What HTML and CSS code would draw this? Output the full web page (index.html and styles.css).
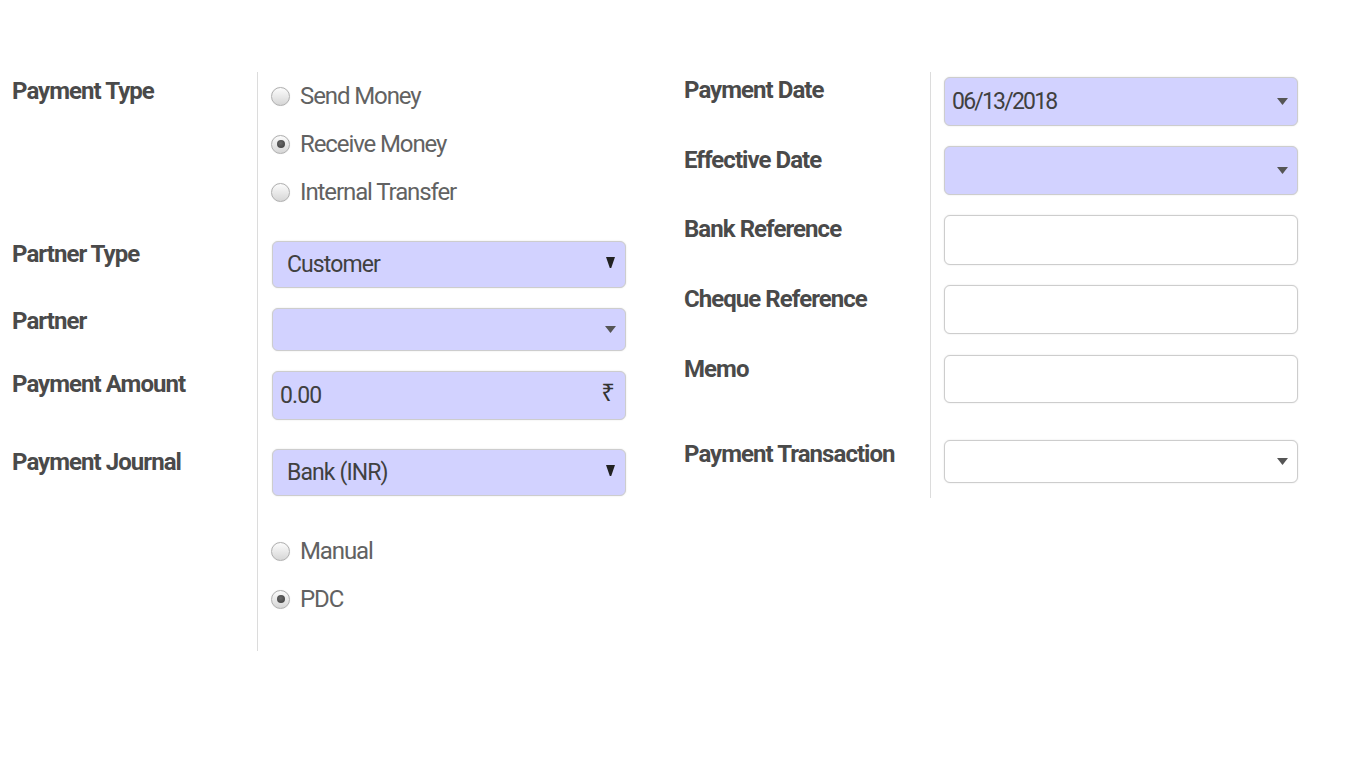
FILE: index.html
```html
<!DOCTYPE html>
<html>
<head>
<meta charset="utf-8">
<link rel="stylesheet" href="styles.css">
</head>
<body>
<div class="sheet">
  <div class="group left">
    <div class="lbl l-first">Payment Type</div>
    <div class="cell pb25">
      <div class="radio"><span class="dot"></span><span class="rtext">Send Money</span></div>
      <div class="radio"><span class="dot on"></span><span class="rtext">Receive Money</span></div>
      <div class="radio"><span class="dot"></span><span class="rtext">Internal Transfer</span></div>
    </div>

    <div class="lbl">Partner Type</div>
    <div class="cell pb20">
      <div class="field req h47 sel"><span class="val">Customer</span><svg class="tri" width="9" height="11" viewBox="0 0 9 11"><polygon points="0,0 9,0 5.2,11 3.8,11" fill="#222"/></svg></div>
    </div>

    <div class="lbl">Partner</div>
    <div class="cell pb20">
      <div class="field req h43 m2o"><span class="val"></span><svg class="caret" width="11" height="7" viewBox="0 0 11 7"><polygon points="0,0 11,0 5.5,7" fill="#555"/></svg></div>
    </div>

    <div class="lbl">Payment Amount</div>
    <div class="cell pb29">
      <div class="field req h49 num"><span class="val">0.00</span><span class="cur">₹</span></div>
    </div>

    <div class="lbl">Payment Journal</div>
    <div class="cell pb31">
      <div class="field req h47 sel"><span class="val">Bank (INR)</span><svg class="tri" width="9" height="11" viewBox="0 0 9 11"><polygon points="0,0 9,0 5.2,11 3.8,11" fill="#222"/></svg></div>
    </div>

    <div class="lbl"></div>
    <div class="cell pb28">
      <div class="radio"><span class="dot"></span><span class="rtext">Manual</span></div>
      <div class="radio"><span class="dot on"></span><span class="rtext">PDC</span></div>
    </div>
  </div>

  <div class="group right">
    <div class="lbl r-first">Payment Date</div>
    <div class="cell pt5 pb20">
      <div class="field req h49 num m2o"><span class="val date">06/13/2018</span><svg class="caret" width="11" height="7" viewBox="0 0 11 7"><polygon points="0,0 11,0 5.5,7" fill="#555"/></svg></div>
    </div>

    <div class="lbl r">Effective Date</div>
    <div class="cell pb20">
      <div class="field req h49 m2o"><span class="val"></span><svg class="caret" width="11" height="7" viewBox="0 0 11 7"><polygon points="0,0 11,0 5.5,7" fill="#555"/></svg></div>
    </div>

    <div class="lbl r">Bank Reference</div>
    <div class="cell pb20">
      <div class="field h50"></div>
    </div>

    <div class="lbl r">Cheque Reference</div>
    <div class="cell pb21">
      <div class="field h49"></div>
    </div>

    <div class="lbl r">Memo</div>
    <div class="cell pb37">
      <div class="field h48"></div>
    </div>

    <div class="lbl r">Payment Transaction</div>
    <div class="cell pb15">
      <div class="field h43 m2o"><span class="val"></span><svg class="caret" width="11" height="7" viewBox="0 0 11 7"><polygon points="0,0 11,0 5.5,7" fill="#555"/></svg></div>
    </div>
  </div>
</div>
</body>
</html>
```

FILE: styles.css
```css
html, body {
  margin: 0;
  padding: 0;
  background: #ffffff;
}

body {
  font-family: Roboto, "Liberation Sans", Arial, sans-serif;
  color: #4c4c4c;
}

.sheet {
  display: flex;
  align-items: flex-start;
  padding-top: 72px;
  gap: 58px;
}

.group {
  display: grid;
  align-items: start;
}

.left {
  grid-template-columns: 245px 369px;
  padding-left: 12px;
}

.right {
  grid-template-columns: 246px 368px;
}

.lbl {
  font-weight: 700;
  font-size: 24px;
  line-height: 26px;
  letter-spacing: -0.95px;
  color: #4a4a4a;
  white-space: nowrap;
}

.l-first {
  padding-top: 6px;
}

.r-first {
  padding-top: 5px;
}

.r {
  padding-top: 1px;
}

.cell {
  align-self: stretch;
  border-left: 1px solid #dcdcdc;
  padding-left: 14px;
}

.right .cell {
  padding-left: 13px;
}

.pt5 { padding-top: 5px; }
.pb15 { padding-bottom: 15px; }
.pb20 { padding-bottom: 20px; }
.pb21 { padding-bottom: 21px; }
.pb25 { padding-bottom: 25px; }
.pb28 { padding-bottom: 28px; }
.pb29 { padding-bottom: 29px; }
.pb31 { padding-bottom: 31px; }
.pb37 { padding-bottom: 37px; }

.radio {
  display: flex;
  align-items: center;
  height: 48px;
}

.dot {
  box-sizing: border-box;
  width: 19px;
  height: 19px;
  border-radius: 50%;
  border: 1px solid #b0b0b0;
  background: linear-gradient(#fcfcfc, #d6d6d6);
  box-shadow: 0 0 1px rgba(0, 0, 0, 0.15);
  margin-left: -1px;
  margin-right: 10px;
  display: flex;
  align-items: center;
  justify-content: center;
  flex: none;
}

.dot.on::after {
  content: "";
  width: 8px;
  height: 8px;
  border-radius: 50%;
  background: radial-gradient(circle at 45% 40%, #6a6a6a, #3a3a3a);
}

.rtext {
  font-size: 24px;
  letter-spacing: -1.1px;
  color: #626262;
  white-space: nowrap;
}

.field {
  box-sizing: border-box;
  width: 354px;
  border: 1px solid #cdcdcd;
  border-radius: 6px;
  background: #ffffff;
  box-shadow: 0 0 1.5px rgba(0, 0, 0, 0.15);
  display: flex;
  align-items: center;
  justify-content: space-between;
  padding: 0 12px 0 14px;
}

.field.req {
  background: #d2d2ff;
}

.field.num {
  padding-left: 7px;
}

.field.m2o {
  padding-right: 7px;
}

.h43 { height: 43px; }
.h47 { height: 47px; }
.h48 { height: 48px; }
.h49 { height: 49px; }
.h50 { height: 50px; }

.val {
  font-size: 23px;
  letter-spacing: -0.9px;
  color: #404040;
  white-space: nowrap;
}

.val.date {
  letter-spacing: -1.8px;
}

.field.sel {
  padding-right: 10px;
}

.tri {
  display: block;
  margin-top: -4px;
}

.caret {
  display: block;
  margin-right: 2px;
}

.cur {
  font-family: "Noto Sans", "DejaVu Sans", sans-serif;
  font-size: 24px;
  color: #333333;
  margin-top: -8px;
  margin-right: -2px;
}
```
